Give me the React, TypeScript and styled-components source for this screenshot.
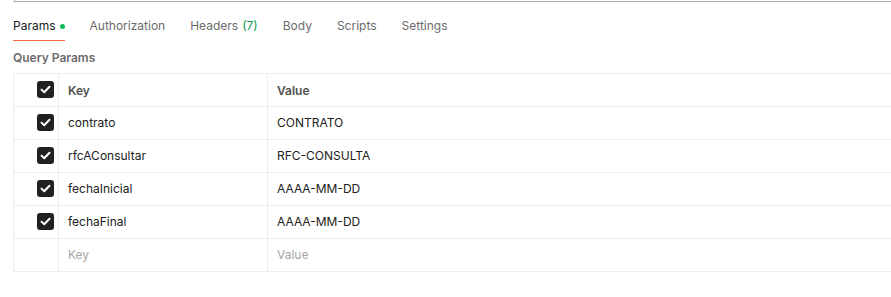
import React from 'react';
import styled, { createGlobalStyle } from 'styled-components';

const Global = createGlobalStyle`
  body {
    margin: 0;
    background: #ffffff;
    font-family: Inter, "Liberation Sans", sans-serif;
    -webkit-font-smoothing: antialiased;
  }
`;

const Page = styled.div`
  width: 891px;
  height: 297px;
  overflow: hidden;
`;

const TopEdge = styled.div`
  margin-left: 14px;
  height: 1px;
  border-left: 1px solid #a6a6a6;
  border-bottom: 1px solid #a6a6a6;
`;

const Tabs = styled.div`
  display: flex;
  padding-left: 13px;
  margin-top: 10px;
`;

const Tab = styled.div<{ $active?: boolean }>`
  display: flex;
  align-items: center;
  height: 27px;
  margin-right: 25px;
  font-size: 12px;
  color: ${(p) => (p.$active ? '#212121' : '#6b6b6b')};
  border-bottom: 1px solid ${(p) => (p.$active ? '#ff6c37' : 'transparent')};
  padding-bottom: 1px;
`;

const Dot = styled.span`
  width: 5px;
  height: 5px;
  border-radius: 50%;
  background: #0cbb52;
  margin-left: 4px;
  margin-top: 1px;
`;

const Count = styled.span`
  color: #0f9a48;
  margin-left: 4px;
`;

const Title = styled.div`
  padding-left: 13px;
  margin-top: 9px;
  font-size: 12px;
  font-weight: 600;
  color: #6b6b6b;
  height: 23px;
`;

const Table = styled.div`
  margin-left: 13px;
  width: 900px;
  border-top: 1px solid #ededed;
  border-left: 1px solid #ededed;
`;

const Row = styled.div`
  display: grid;
  grid-template-columns: 44px 209px 1fr;
  height: 33px;
  border-bottom: 1px solid #ededed;
  box-sizing: border-box;
`;

const Cell = styled.div<{ $head?: boolean; $muted?: boolean }>`
  display: flex;
  align-items: center;
  padding-left: 9px;
  padding-bottom: ${(p) => (p.$head ? 0 : 2)}px;
  font-size: 12px;
  font-weight: ${(p) => (p.$head ? 600 : 400)};
  color: ${(p) => (p.$muted ? '#a6a6a6' : p.$head ? '#505050' : '#212121')};
  border-left: 1px solid #ededed;
`;

const CheckCell = styled.div`
  display: flex;
  align-items: center;
  justify-content: flex-end;
  padding-right: 4px;
  padding-bottom: 1px;
`;

const Box = styled.div`
  width: 17px;
  height: 17px;
  border-radius: 3px;
  background: #212121;
  display: flex;
  align-items: center;
  justify-content: center;
`;

const Check = () => (
  <Box>
    <svg width="11" height="9" viewBox="0 0 11 9">
      <path d="M1.5 4.6 L4.2 7.2 L9.5 1.8" fill="none" stroke="#fff" strokeWidth="2" strokeLinecap="round" strokeLinejoin="round" />
    </svg>
  </Box>
);

const rows = [
  ['contrato', 'CONTRATO'],
  ['rfcAConsultar', 'RFC-CONSULTA'],
  ['fechaInicial', 'AAAA-MM-DD'],
  ['fechaFinal', 'AAAA-MM-DD'],
];

const App = () => {
  return (
    <Page>
      <Global />
      <TopEdge />
      <Tabs>
        <Tab $active>
          Params<Dot />
        </Tab>
        <Tab>Authorization</Tab>
        <Tab>
          Headers<Count>(7)</Count>
        </Tab>
        <Tab>Body</Tab>
        <Tab>Scripts</Tab>
        <Tab>Settings</Tab>
      </Tabs>
      <Title>Query Params</Title>
      <Table>
        <Row>
          <CheckCell>
            <Check />
          </CheckCell>
          <Cell $head>Key</Cell>
          <Cell $head>Value</Cell>
        </Row>
        {rows.map(([k, v]) => (
          <Row key={k}>
            <CheckCell>
              <Check />
            </CheckCell>
            <Cell>{k}</Cell>
            <Cell>{v}</Cell>
          </Row>
        ))}
        <Row>
          <CheckCell />
          <Cell $muted>Key</Cell>
          <Cell $muted>Value</Cell>
        </Row>
      </Table>
    </Page>
  );
};

export default App;
